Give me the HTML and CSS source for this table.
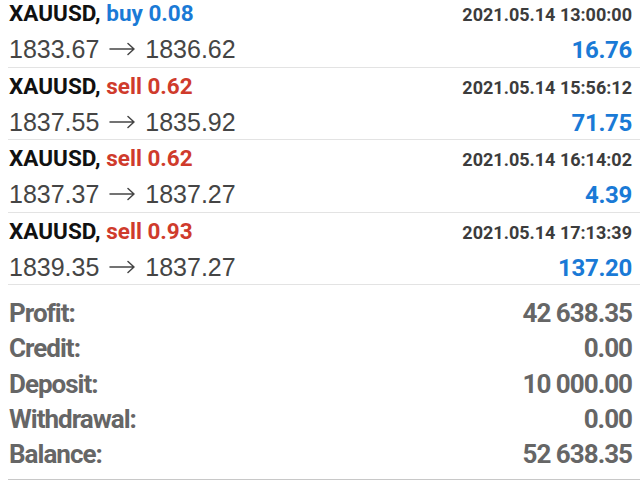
FILE: index.html
```html
<!DOCTYPE html>
<html>
<head>
<meta charset="utf-8">
<link rel="stylesheet" href="styles.css">
</head>
<body>
<div class="screen">
  <div class="trades">
    <div class="trade">
      <div class="line">
        <span class="title"><span class="sym">XAUUSD,</span> <span class="buy">buy 0.08</span></span>
        <span class="time">2021.05.14 13:00:00</span>
      </div>
      <div class="line">
        <span class="price">1833.67 <svg class="arrow" viewBox="0 0 26 14" aria-label="→"><path d="M1 7H25M19 1.5L25 7L19 12.5"/></svg> 1836.62</span>
        <span class="profit">16.76</span>
      </div>
    </div>
    <div class="trade">
      <div class="line">
        <span class="title"><span class="sym">XAUUSD,</span> <span class="sell">sell 0.62</span></span>
        <span class="time">2021.05.14 15:56:12</span>
      </div>
      <div class="line">
        <span class="price">1837.55 <svg class="arrow" viewBox="0 0 26 14" aria-label="→"><path d="M1 7H25M19 1.5L25 7L19 12.5"/></svg> 1835.92</span>
        <span class="profit">71.75</span>
      </div>
    </div>
    <div class="trade">
      <div class="line">
        <span class="title"><span class="sym">XAUUSD,</span> <span class="sell">sell 0.62</span></span>
        <span class="time">2021.05.14 16:14:02</span>
      </div>
      <div class="line">
        <span class="price">1837.37 <svg class="arrow" viewBox="0 0 26 14" aria-label="→"><path d="M1 7H25M19 1.5L25 7L19 12.5"/></svg> 1837.27</span>
        <span class="profit">4.39</span>
      </div>
    </div>
    <div class="trade">
      <div class="line">
        <span class="title"><span class="sym">XAUUSD,</span> <span class="sell">sell 0.93</span></span>
        <span class="time">2021.05.14 17:13:39</span>
      </div>
      <div class="line">
        <span class="price">1839.35 <svg class="arrow" viewBox="0 0 26 14" aria-label="→"><path d="M1 7H25M19 1.5L25 7L19 12.5"/></svg> 1837.27</span>
        <span class="profit">137.20</span>
      </div>
    </div>
  </div>
  <div class="summary">
    <div class="srow"><span>Profit:</span><span>42 638.35</span></div>
    <div class="srow"><span>Credit:</span><span>0.00</span></div>
    <div class="srow"><span>Deposit:</span><span>10 000.00</span></div>
    <div class="srow"><span>Withdrawal:</span><span>0.00</span></div>
    <div class="srow"><span>Balance:</span><span>52 638.35</span></div>
  </div>
</div>
</body>
</html>
```

FILE: styles.css
```css
html, body {
  margin: 0;
  padding: 0;
  background: #ffffff;
  overflow: hidden;
}
body {
  width: 640px;
  height: 480px;
  font-family: Roboto, "Liberation Sans", sans-serif;
}
.screen {
  margin-top: -5px;
}
.trade {
  margin-left: 8px;
  padding: 0 8px 0 1px;
  height: 72.5px;
  box-sizing: border-box;
  border-bottom: 1px solid #e3e3e3;
  display: flex;
  flex-direction: column;
}
.line {
  display: flex;
  justify-content: space-between;
  align-items: baseline;
  height: 36px;
  line-height: 36px;
}
.title {
  font-size: 22.5px;
  font-weight: 700;
}
.sym { color: #111111; }
.buy { color: #1a7ad6; }
.sell { color: #cf3b2c; }
.time {
  font-size: 18px;
  font-weight: 700;
  color: #3c3c3c;
}
.price {
  font-family: "Liberation Sans", Arial, sans-serif;
  font-size: 25px;
  font-weight: 400;
  color: #454545;
}
.arrow {
  width: 26px;
  height: 14px;
  margin: 0 3px;
  vertical-align: 2px;
  fill: none;
  stroke: #454545;
  stroke-width: 1.5;
  stroke-linecap: round;
  stroke-linejoin: round;
}
.profit {
  font-size: 24px;
  font-weight: 700;
  color: #1a7ad6;
  letter-spacing: -0.3px;
}
.summary {
  margin-left: 8px;
  padding: 11px 8px 6.5px 1px;
  border-bottom: 1px solid #c8c8c8;
}
.srow {
  display: flex;
  justify-content: space-between;
  font-size: 26px;
  font-weight: 700;
  line-height: 35.25px;
  color: #666666;
  letter-spacing: -1px;
}
```
